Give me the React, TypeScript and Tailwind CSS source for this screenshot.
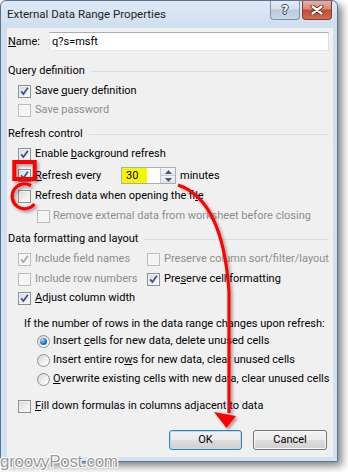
import React from "react";

function Box({ checked = false, disabled = false }: { checked?: boolean; disabled?: boolean }) {
  return (
    <span
      className={
        disabled
          ? "relative flex w-[13px] h-[13px] shrink-0 border border-[#bcbcbc] bg-[#f4f4f4]"
          : "relative flex w-[13px] h-[13px] shrink-0 border border-[#8e8f8f] bg-[linear-gradient(135deg,#d3d6db,#eef0f2_60%,#ffffff)]"
      }
    >
      <span className="absolute inset-0 border border-[#f6f6f6]/70" />
      {checked && (
        <svg width="11" height="11" viewBox="0 0 11 11" className="absolute left-0 top-0">
          <path
            d="M2.2 5.4 L4.4 8.1 L8.9 1.8"
            fill="none"
            stroke={disabled ? "#a9a9a9" : "#3d4f86"}
            strokeWidth="1.7"
          />
        </svg>
      )}
    </span>
  );
}

function Radio({ on = false }: { on?: boolean }) {
  return (
    <span className="relative flex items-center justify-center w-[13px] h-[13px] shrink-0 rounded-full border border-[#8e8f8f] bg-[linear-gradient(135deg,#d0d3d8,#f2f3f4_60%,#ffffff)]">
      {on && (
        <span className="w-[7px] h-[7px] rounded-full bg-[radial-gradient(circle_at_35%_30%,#a6dcff,#2a74c0_55%,#0f3f7c)]" />
      )}
    </span>
  );
}

function Header({ text, className }: { text: string; className: string }) {
  return (
    <div className={className}>
      <span className="whitespace-nowrap">{text}</span>
      <span className="ml-[6px] flex-1 h-px bg-[#d7dee4]" />
    </div>
  );
}

export default function App() {
  return (
    <div className="relative w-[348px] h-[472px] bg-white overflow-hidden font-['Roboto',sans-serif] text-[11px] leading-[16px] text-black">
      {/* window */}
      <div className="w-[338px] h-[462px] flex flex-col rounded-t-[6px] border border-[#5b7491] bg-[linear-gradient(180deg,#dfe9f5,#cfdff0_26px,#d3e2f2)] shadow-[4px_4px_8px_rgba(0,0,0,0.5)] pl-[6px] pr-[4px] pb-[4px]">
        {/* title bar */}
        <div className="h-[27px] flex items-start justify-between shrink-0">
          <div className="mt-[5px] text-[11.5px] text-[#1e1e1e] whitespace-nowrap">External Data Range Properties</div>
          <div className="flex gap-[2px] mr-[1px]">
            <div className="w-[30px] h-[19px] rounded-b-[4px] border border-t-0 border-[#7f91a8] bg-[linear-gradient(180deg,#e6eef7,#d2deeb_45%,#b9cadd_50%,#c9d8e8)] flex items-center justify-center">
              <span className="font-['DejaVu_Sans',sans-serif] font-bold text-[12px] leading-none text-white [text-shadow:0_0_1px_#3b4e66,0_0_1px_#3b4e66,1px_0_0_#3b4e66,-1px_0_0_#3b4e66,0_1px_0_#3b4e66,0_-1px_0_#3b4e66]">?</span>
            </div>
            <div className="w-[30px] h-[19px] rounded-b-[4px] border border-t-0 border-[#8c3a2d] bg-[linear-gradient(180deg,#eab0a4,#d98877_45%,#c24a34_50%,#d36d55)] flex items-center justify-center">
              <svg width="14" height="10" viewBox="0 0 14 10">
                <path d="M2.5 1.5 L11.5 8.5 M11.5 1.5 L2.5 8.5" stroke="#4a1c14" strokeWidth="4" strokeLinecap="round" />
                <path d="M2.5 1.5 L11.5 8.5 M11.5 1.5 L2.5 8.5" stroke="#ffffff" strokeWidth="2.4" strokeLinecap="round" />
              </svg>
            </div>
          </div>
        </div>

        {/* content */}
        <div className="flex-1 flex flex-col bg-[#f0f0f0] pl-[1px] pr-[4px]">
          {/* Name row */}
          <div className="mt-[4px] h-[19px] flex items-center">
            <span className="w-[41px]"><u>N</u>ame:</span>
            <div className="flex-1 h-[19px] border border-[#abadb3] border-b-[#e3e9ef] border-l-[#e2e3ea] border-r-[#dbdfe6] bg-white flex items-center pl-[2px]">
              q?s=msft
            </div>
          </div>

          <Header text="Query definition" className="mt-[12px] h-[16px] flex items-center" />
          <div className="mt-[4px] h-[16px] flex items-center pl-[10px] gap-[4px]">
            <Box checked />
            <span>Save <u>q</u>uery definition</span>
          </div>
          <div className="mt-[3px] h-[16px] flex items-center pl-[10px] gap-[4px] text-[#8d8d8d]">
            <Box disabled />
            <span>Save password</span>
          </div>

          <Header text="Refresh control" className="mt-[8px] h-[16px] flex items-center" />
          <div className="mt-[4px] h-[16px] flex items-center pl-[10px] gap-[4px]">
            <Box checked />
            <span>Enable <u>b</u>ackground refresh</span>
          </div>
          <div className="mt-[5px] h-[17px] flex items-center pl-[10px] gap-[4px]">
            <Box checked />
            <span className="w-[82px]"><u>R</u>efresh every</span>
            <div className="w-[55px] h-[17px] flex border border-[#abadb3] bg-white">
              <div className="w-[25px] h-full bg-[#f5f700] pl-[4px] flex items-center">30</div>
              <div className="flex-1" />
              <div className="w-[15px] h-full flex flex-col border-l border-[#c5cbd3]">
                <div className="flex-1 flex items-center justify-center border-b border-[#c5cbd3] bg-[linear-gradient(180deg,#f7f7f7,#e4e6e9)]">
                  <svg width="7" height="4" viewBox="0 0 7 4"><path d="M0 4 L3.5 0 L7 4 Z" fill="#4d5a6b" /></svg>
                </div>
                <div className="flex-1 flex items-center justify-center bg-[linear-gradient(180deg,#f2f3f4,#dfe2e6)]">
                  <svg width="7" height="4" viewBox="0 0 7 4"><path d="M0 0 L3.5 4 L7 0 Z" fill="#4d5a6b" /></svg>
                </div>
              </div>
            </div>
            <span>minutes</span>
          </div>
          <div className="mt-[4px] h-[16px] flex items-center pl-[10px] gap-[4px]">
            <Box />
            <span>Refresh data when opening the fi<u>l</u>e</span>
          </div>
          <div className="mt-[4px] h-[16px] flex items-center pl-[29px] gap-[3px] text-[#8d8d8d]">
            <Box disabled />
            <span>Remove external data from worksheet before closing</span>
          </div>

          <Header text="Data formatting and layout" className="mt-[7px] h-[16px] flex items-center" />
          <div className="mt-[4px] h-[16px] grid grid-cols-[129px_1fr] pl-[10px] items-center">
            <div className="flex items-center gap-[4px] text-[#8d8d8d]">
              <Box checked disabled />
              <span>Include field names</span>
            </div>
            <div className="flex items-center gap-[4px] text-[#8d8d8d]">
              <Box disabled />
              <span className="whitespace-nowrap">Preserve column sort/filter/layout</span>
            </div>
          </div>
          <div className="mt-[4px] h-[16px] grid grid-cols-[129px_1fr] pl-[10px] items-center">
            <div className="flex items-center gap-[4px] text-[#8d8d8d]">
              <Box disabled />
              <span>Include row numbers</span>
            </div>
            <div className="flex items-center gap-[4px]">
              <Box checked />
              <span>Pre<u>s</u>erve cell formatting</span>
            </div>
          </div>
          <div className="mt-[3px] h-[16px] flex items-center pl-[10px] gap-[4px]">
            <Box checked />
            <span><u>A</u>djust column width</span>
          </div>

          <div className="mt-[10px] h-[16px] flex items-center pl-[16px] whitespace-nowrap">
            If the number of rows in the data range changes upon refresh:
          </div>
          <div className="mt-[1px] h-[16px] flex items-center pl-[29px] gap-[3px]">
            <Radio on />
            <span>Insert <u>c</u>ells for new data, delete unused cells</span>
          </div>
          <div className="mt-[3px] h-[16px] flex items-center pl-[29px] gap-[3px]">
            <Radio />
            <span>Insert entire ro<u>w</u>s for new data, clear unused cells</span>
          </div>
          <div className="mt-[3px] h-[16px] flex items-center pl-[29px] gap-[3px] whitespace-nowrap">
            <Radio />
            <span><u>O</u>verwrite existing cells with new data, clear unused cells</span>
          </div>

          <div className="mt-[11px] h-[16px] flex items-center pl-[10px] gap-[4px]">
            <Box />
            <span><u>F</u>ill down formulas in columns adjacent to data</span>
          </div>

          <div className="mt-[16px] flex justify-end gap-[11px] pr-[2px]">
            <div className="w-[73px] h-[20px] rounded-[3px] border border-[#3c7fb1] bg-[linear-gradient(180deg,#f2f2f2,#ebebeb_48%,#dddddd_52%,#cfcfcf)] shadow-[inset_0_0_0_1px_#aee2fb] flex items-center justify-center">
              OK
            </div>
            <div className="w-[74px] h-[20px] rounded-[3px] border border-[#707070] bg-[linear-gradient(180deg,#f2f2f2,#ebebeb_48%,#dddddd_52%,#cfcfcf)] shadow-[inset_0_0_0_1px_#fcfcfc] flex items-center justify-center">
              Cancel
            </div>
          </div>
        </div>
      </div>

      {/* red annotations */}
      <svg className="absolute left-0 top-0 pointer-events-none" width="348" height="472" viewBox="0 0 348 472">
        <defs>
          <filter id="sh" x="-20%" y="-20%" width="140%" height="140%">
            <feDropShadow dx="2" dy="2" stdDeviation="1.6" floodColor="#000000" floodOpacity="0.35" />
          </filter>
        </defs>
        <g filter="url(#sh)" fill="none" stroke="#ff0000">
          <rect x="14.3" y="162" width="20.4" height="17" strokeWidth="4" />
          <path d="M31 185.5 A12.5 12.5 0 1 0 34.5 204" strokeWidth="3.2" />
          <path d="M178 185 Q223 200 229 292 L229 413" strokeWidth="3.2" />
          <path d="M214 412 L236 416 L226.5 428 Z" fill="#ff0000" stroke="none" />
        </g>
      </svg>

      {/* watermark */}
      <div className="absolute left-[0px] top-[452px] font-['Liberation_Sans',sans-serif] text-[17px] leading-[20px] tracking-[-0.3px] text-[#9a9a9a] [text-shadow:1px_1px_0_#ffffff,-1px_-1px_0_#ffffff,1px_-1px_0_#ffffff,-1px_1px_0_#ffffff]">
        groovyPost.com
      </div>
    </div>
  );
}
